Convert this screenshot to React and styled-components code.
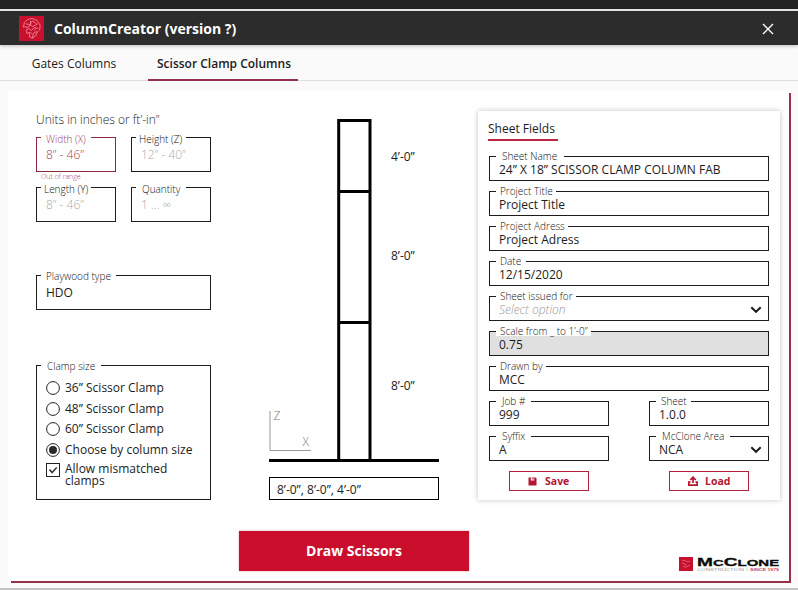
import React from "react";
import styled, { createGlobalStyle, css } from "styled-components";

const RED = "#cc0e2d";
const INK = "#1c1c1c";
const WINE = "#98304a";

const GlobalStyle = createGlobalStyle`
  * { box-sizing: border-box; }
  body { margin: 0; background: #fafafa; font-family: "Open Sans", "Noto Sans", sans-serif; color: ${INK}; }
`;

const Window = styled.div`
  width: 798px;
  height: 590px;
  display: flex;
  flex-direction: column;
  overflow: hidden;
  background: #fafafa;
  border-top: 9px solid #222;
`;

const TitleBar = styled.header`
  flex: none;
  height: 36px;
  display: flex;
  align-items: center;
  gap: 10px;
  padding: 0 23px 0 19px;
  background: #2c2c2c;
  border-top: 2px solid #dfe5e3;
  box-shadow: 0 1px 4px rgba(0, 0, 0, 0.25);
`;

const AppTitle = styled.h1`
  flex: 1;
  margin: 0;
  padding-top: 2px;
  font-size: 14px;
  line-height: 20px;
  font-weight: 700;
  color: #fff;
`;

const CloseButton = styled.button`
  width: 14px;
  height: 14px;
  margin-top: 2px;
  padding: 0;
  border: 0;
  background: none;
  display: flex;
  align-items: center;
  justify-content: center;
`;

const Tabs = styled.nav`
  flex: none;
  height: 36px;
  display: flex;
  padding-left: 23px;
  gap: 23px;
  border-bottom: 1px solid #dedede;
`;

const Tab = styled.a`
  height: 36px;
  width: ${(p) => p.$width}px;
  padding-left: ${(p) => (p.$active ? 2 : 0)}px;
  text-align: center;
  font-size: 12px;
  line-height: 37px;
  white-space: nowrap;
  font-weight: ${(p) => (p.$active ? 600 : 400)};
  border-bottom: 2px solid ${(p) => (p.$active ? WINE : "transparent")};
`;

const Panel = styled.main`
  flex: none;
  width: 783px;
  height: 492px;
  margin: 10px 0 0 8px;
  padding: 19px 11px 0 28px;
  display: grid;
  grid-template-columns: 203px 239px 302px;
  background:
    linear-gradient(${WINE}, ${WINE}) right 0 top 2px / 2px 490px no-repeat,
    linear-gradient(${WINE}, ${WINE}) right 0 bottom 0 / 780px 2px no-repeat,
    #fff;
`;

const BottomEdge = styled.div`
  height: 2px;
  margin-top: 5px;
  background: #c4c4c4;
`;

const Parameters = styled.section`
  width: 175px;
  display: flex;
  flex-direction: column;
`;

const UnitsNote = styled.p`
  margin: 0 0 8px;
  padding-top: 1px;
  height: 19px;
  font-size: 12px;
  line-height: 18px;
  font-weight: 300;
  color: #222;
`;

const SizeGrid = styled.div`
  display: grid;
  grid-template-columns: 80px 80px;
  grid-auto-rows: 35px;
  column-gap: 15px;
  row-gap: 15px;
`;

const FieldBox = styled.div`
  position: relative;
  height: ${(p) => (p.$tall ? 35 : 25)}px;
  display: flex;
  align-items: center;
  justify-content: space-between;
  padding: ${(p) => (p.$tall ? "0 6px 0 9px" : "2px 6px 0 9px")};
  border: 1px solid ${(p) => (p.$error ? "#8d2840" : INK)};
  background: ${(p) => (p.$disabled ? "#e0e0e0" : "#fff")};
`;

const FieldLabel = styled.label`
  position: absolute;
  left: ${(p) => (p.$tall ? 4 : 6)}px;
  top: ${(p) => (p.$tall ? -5 : -6)}px;
  width: ${(p) => p.$notch}px;
  height: 10px;
  padding-left: ${(p) => p.$inset}px;
  background: #fff;
  font-size: 10px;
  line-height: 10px;
  font-weight: 300;
  white-space: nowrap;
  color: ${(p) => (p.$error ? "#a3405a" : "#111")};

  ${SizeGrid} & {
    top: -4px;
  }
`;

const FieldValue = styled.span`
  font-size: 12px;
  line-height: 12px;
  font-weight: 400;
  white-space: nowrap;
  ${(p) => p.$placeholder && css`font-weight: 300; color: #aaa;`}
  ${(p) => p.$italic && css`font-style: italic; color: #999;`}
  ${(p) => p.$error && css`color: #a3405a; font-weight: 300;`}
`;

const ErrorNote = styled.span`
  position: absolute;
  left: 4px;
  top: 35px;
  font-size: 7px;
  line-height: 7px;
  font-weight: 300;
  color: #b03a55;
`;

const PlywoodSlot = styled.div`
  margin-top: 53px;
`;

const ClampGroup = styled.div`
  position: relative;
  height: 135px;
  margin-top: 55px;
  padding: 12px 9px 0;
  border: 1px solid ${INK};
  display: flex;
  flex-direction: column;
`;

const Choice = styled.label`
  height: ${(p) => (p.$multiline ? 30 : 20.5)}px;
  display: grid;
  grid-template-columns: 14px 1fr;
  column-gap: 5px;
  align-items: ${(p) => (p.$multiline ? "start" : "center")};
  padding-top: ${(p) => (p.$multiline ? 3 : 0)}px;
  font-size: 12px;
  line-height: 12px;
`;

const Drawing = styled.section`
  width: 230px;
  display: flex;
  flex-direction: column;
  align-items: center;
`;

const LengthsInput = styled.div`
  width: 170px;
  height: 23px;
  margin-top: 15px;
  padding-left: 7px;
  border: 1px solid #000;
  font-size: 12px;
  line-height: 24px;
`;

const DrawButton = styled.button`
  width: 230px;
  height: 40px;
  margin-top: 31px;
  padding: 0;
  border: 0;
  background: ${RED};
  color: #fff;
  font: 700 14px/40px "Open Sans", sans-serif;
  box-shadow: 0 0 2px rgba(204, 14, 45, 0.4);
`;

const SheetColumn = styled.section`
  display: flex;
  flex-direction: column;
`;

const SheetCard = styled.div`
  height: 389px;
  margin-top: 1px;
  padding: 10px 11px 0;
  background: #fff;
  box-shadow: 0 0 5px rgba(0, 0, 0, 0.25);
`;

const SheetTitle = styled.h2`
  width: 70px;
  height: 20px;
  margin: 0 0 15px -1px;
  font-size: 12px;
  line-height: 16px;
  font-weight: 400;
  white-space: nowrap;
  border-bottom: 2px solid #b82643;
`;

const SheetForm = styled.div`
  display: flex;
  flex-direction: column;
  gap: 10px;
`;

const Split = styled.div`
  display: grid;
  grid-template-columns: 120px 120px;
  column-gap: 40px;
`;

const Actions = styled.div`
  display: grid;
  grid-template-columns: 80px 80px;
  column-gap: 80px;
  padding-left: 20px;
`;

const ActionButton = styled.button`
  height: 20px;
  padding: 0 0 0 18px;
  border: 1px solid #b5213d;
  background: #fff;
  color: #b5152f;
  display: flex;
  align-items: center;
  gap: ${(p) => p.$gap}px;
  font: 700 10.5px/18px "Open Sans", sans-serif;
`;

const Brand = styled.div`
  margin: 56px 0 0 201px;
  height: 16px;
`;

function Emblem({ size }) {
  return (
    <svg width={size} height={size} viewBox="0 0 26 26">
      <rect width="26" height="26" fill="#c8102e" />
      <g fill="none" stroke="#ef9aa6" strokeWidth="0.8">
        <path d="M4.5 12l1-5 3-3 5-1.500 5 2 3.500 5-.5 5-3 3" />
        <path d="M7 8l4 1 3-4 4 3M5.500 11l4 1 2-3 3 2 5-3M7 15l3-2 3 2 3-3 4 1M8 18v-3M8 18l4-1 2 2" />
        <path d="M11 18v4l3 1 1-5 3-2M14 23l4-3v-4M16 15l1-2M12 9V5" />
      </g>
    </svg>
  );
}

function Chevron() {
  return (
    <svg width="12" height="8" viewBox="0 0 12 8">
      <path d="M1.300 1.200L6 5.800l4.700-4.600" fill="none" stroke="#1a1a1a" strokeWidth="1.9" />
    </svg>
  );
}

function Field({ label, value, notch, inset = 4, tall, placeholder, italic, error, disabled, select }) {
  return (
    <FieldBox $tall={tall} $error={error} $disabled={disabled}>
      <FieldLabel $notch={notch} $inset={inset} $tall={tall} $error={error}>{label}</FieldLabel>
      <FieldValue $placeholder={placeholder} $italic={italic} $error={error}>{value}</FieldValue>
      {select && <Chevron />}
      {error && <ErrorNote>Out of range</ErrorNote>}
    </FieldBox>
  );
}

function Radio({ checked }) {
  return (
    <svg width="14" height="14" viewBox="0 0 14 14">
      <circle cx="7" cy="7" r="6.4" fill="#fff" stroke="#222" />
      {checked && <circle cx="7" cy="7" r="4" fill="#2a2a2a" />}
    </svg>
  );
}

function Checkbox() {
  return (
    <svg width="14" height="14" viewBox="0 0 14 14">
      <rect x="0.5" y="0.5" width="13" height="13" fill="#fff" stroke="#222" />
      <path d="M3.500 6.500l2.600 3 4.600-5" fill="none" stroke="#333" strokeWidth="1.5" />
    </svg>
  );
}

function ColumnDiagram() {
  return (
    <svg width="170" height="352" viewBox="0 0 170 352" fontFamily="Open Sans" fontSize="12">
      <g fill="none" stroke="#000" strokeWidth="3">
        <path d="M69.700 350V10.500H101V350" />
        <path d="M70 81.500h31M70 212.500h31" />
        <path d="M0 350.500h170" />
      </g>
      <path d="M1 301v39.500H42" fill="none" stroke="#999" />
      <g fill="#777" fontWeight="300">
        <text x="4.500" y="310">Z</text>
        <text x="33.500" y="336">X</text>
      </g>
      <g fill={INK}>
        <text x="122" y="51">4’-0”</text>
        <text x="122" y="150">8’-0”</text>
        <text x="122" y="280">8’-0”</text>
      </g>
    </svg>
  );
}

function SaveIcon() {
  return (
    <svg width="9" height="9" viewBox="0 0 9 9">
      <path d="M0.500 0.500h7l1 1v7h-8z" fill="#b5152f" />
      <path d="M2.800 0.500h3.400v3H2.800z" fill="#fff" />
      <path d="M4.400 0.500h1.200v2H4.400z" fill="#b5152f" />
    </svg>
  );
}

function LoadIcon() {
  return (
    <svg width="10" height="10" viewBox="0 0 10 10" fill="none" stroke="#b5152f" strokeWidth="1.7">
      <path d="M5 7V1.500M2.200 4L5 1.300 7.800 4" />
      <path d="M2.500 6.200H0.800v3h8.400v-3H7.500" />
    </svg>
  );
}

function McCloneLogo() {
  return (
    <svg width="101" height="16" viewBox="0 0 101 16" fontFamily="Liberation Sans">
      <svg width="14" height="14" viewBox="0 0 14 14">
        <rect width="14" height="14" fill="#c8102e" />
        <path d="M3 4l3-1 2 2 3-1M3 6l3 1 2 3 3-2M4 9l3 2" fill="none" stroke="#e87b8b" strokeWidth="0.7" />
      </svg>
      <g transform="translate(18 9) scale(1.3 1)" fill="#0b0b0b" stroke="#0b0b0b" strokeWidth="0.3" fontWeight="700">
        <text fontSize="11.5" textLength="63.2" lengthAdjust="spacingAndGlyphs">
          M<tspan fontSize="9">C</tspan>C<tspan fontSize="9">LONE</tspan>
        </text>
      </g>
      <text x="18" y="13.6" fontSize="3.8" fill="#999" textLength="47" lengthAdjust="spacingAndGlyphs">CONSTRUCTION</text>
      <path d="M68 10.500v3.500" stroke="#999" strokeWidth="0.5" />
      <text x="71" y="13.6" fontSize="3.8" fontWeight="700" fill="#c8405a" textLength="29" lengthAdjust="spacingAndGlyphs">SINCE 1979</text>
    </svg>
  );
}

export default function App() {
  return (
    <>
      <GlobalStyle />
      <Window>
        <TitleBar>
          <Emblem size={25} />
          <AppTitle>ColumnCreator (version ?)</AppTitle>
          <CloseButton aria-label="Close">
            <svg width="12" height="12" viewBox="0 0 12 12">
              <path d="M1 1l10 10M11 1L1 11" stroke="#fff" strokeWidth="1.4" />
            </svg>
          </CloseButton>
        </TitleBar>
        <Tabs>
          <Tab $width={102}>Gates Columns</Tab>
          <Tab $width={150} $active>Scissor Clamp Columns</Tab>
        </Tabs>
        <Panel>
          <Parameters>
            <UnitsNote>Units in inches or ft’-in”</UnitsNote>
            <SizeGrid>
              <Field label="Width (X)" value="8” - 46”" notch={50} inset={5} tall error />
              <Field label="Height (Z)" value="12” - 40”" notch={50} inset={3} tall placeholder />
              <Field label="Length (Y)" value="8” - 46”" notch={50} inset={3} tall placeholder />
              <Field label="Quantity" value="1 ... ∞" notch={50} inset={6} tall placeholder />
            </SizeGrid>
            <PlywoodSlot>
              <Field label="Playwood type" value="HDO" notch={75} inset={5} tall />
            </PlywoodSlot>
            <ClampGroup>
              <FieldLabel $notch={60} $inset={6} $tall>Clamp size</FieldLabel>
              <Choice><Radio />36” Scissor Clamp</Choice>
              <Choice><Radio />48” Scissor Clamp</Choice>
              <Choice><Radio />60” Scissor Clamp</Choice>
              <Choice><Radio checked />Choose by column size</Choice>
              <Choice $multiline><Checkbox /><span>Allow mismatched clamps</span></Choice>
            </ClampGroup>
          </Parameters>
          <Drawing>
            <ColumnDiagram />
            <LengthsInput>8’-0”, 8’-0”, 4’-0”</LengthsInput>
            <DrawButton>Draw Scissors</DrawButton>
          </Drawing>
          <SheetColumn>
            <SheetCard>
              <SheetTitle>Sheet Fields</SheetTitle>
              <SheetForm>
                <Field label="Sheet Name" value="24” X 18” SCISSOR CLAMP COLUMN FAB" notch={68} inset={6} />
                <Field label="Project Title" value="Project Title" notch={60} />
                <Field label="Project Adress" value="Project Adress" notch={72} />
                <Field label="Date" value="12/15/2020" notch={30} />
                <Field label="Sheet issued for" value="Select option" notch={80} italic placeholder select />
                <Field label="Scale from _ to 1’-0”" value="0.75" notch={95} disabled />
                <Field label="Drawn by" value="MCC" notch={50} />
                <Split>
                  <Field label="Job #" value="999" notch={35} inset={6} />
                  <Field label="Sheet" value="1.0.0" notch={35} inset={5} />
                </Split>
                <Split>
                  <Field label="Syffix" value="A" notch={35} inset={6} />
                  <Field label="McClone Area" value="NCA" notch={74} inset={6} select />
                </Split>
                <Actions>
                  <ActionButton $gap={8}><SaveIcon />Save</ActionButton>
                  <ActionButton $gap={7}><LoadIcon />Load</ActionButton>
                </Actions>
              </SheetForm>
            </SheetCard>
            <Brand><McCloneLogo /></Brand>
          </SheetColumn>
        </Panel>
        <BottomEdge />
      </Window>
    </>
  );
}
